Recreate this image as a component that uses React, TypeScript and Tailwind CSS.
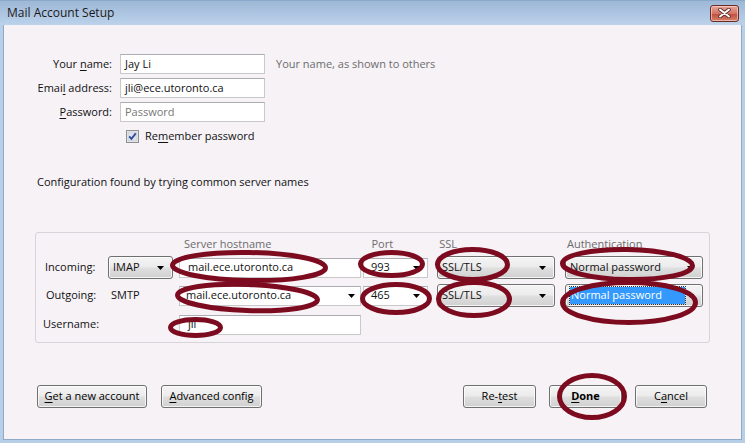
import React from "react";

const Arrow = () => (
  <svg width="7" height="4" viewBox="0 0 7 4" className="shrink-0">
    <path d="M0 0H7L3.5 4Z" fill="#000" />
  </svg>
);

function Drop({ cls, children }: { cls: string; children: React.ReactNode }) {
  return (
    <div
      className={
        "h-[23px] rounded-[3px] border border-[#707070] bg-[linear-gradient(#f4f4f4,#ececec_45%,#dedede_55%,#d0d0d0)] shadow-[inset_0_0_0_1px_rgba(255,255,255,0.75)] flex items-center justify-between pl-[4px] pr-[8px] " +
        cls
      }
    >
      {children}
    </div>
  );
}

function Btn({ cls, children }: { cls: string; children: React.ReactNode }) {
  return (
    <div
      className={
        "h-[23px] rounded-[3px] border border-[#707070] bg-[linear-gradient(#f4f4f4,#ececec_45%,#dedede_55%,#d0d0d0)] shadow-[inset_0_0_0_1px_rgba(255,255,255,0.75)] flex items-center justify-center text-[#000] " +
        cls
      }
    >
      {children}
    </div>
  );
}

function Field({ cls, children }: { cls: string; children?: React.ReactNode }) {
  return (
    <div
      className={
        "h-[20px] bg-white border border-[#c9c9cc] border-t-[#abadb3] flex items-center " +
        cls
      }
    >
      {children}
    </div>
  );
}

const U = ({ c }: { c: string }) => (
  <span className="underline underline-offset-[2px] decoration-1">{c}</span>
);

export default function App() {
  return (
    <div className="relative w-[745px] h-[443px] flex flex-col overflow-hidden font-['Open_Sans','Noto_Sans',sans-serif] text-[11px] text-[#111] bg-[#b7cfe9]">
      {/* Title bar */}
      <div className="h-[25px] shrink-0 flex items-center justify-between pl-[7px] pr-[6px] bg-[linear-gradient(#9db7d6,#bcd2eb)] border-t border-[#8aa8cb]">
        <span className="text-[12px] text-[#1a1a1a] leading-none">Mail Account Setup</span>
        <div className="w-[29px] h-[17px] rounded-[3px] border border-[#6b2b25] bg-[linear-gradient(#e6a69a,#d27466_50%,#c2503f_55%,#d5806a)] flex items-center justify-center shadow-[inset_0_0_0_1px_rgba(255,220,210,0.6)]">
          <svg width="13" height="10" viewBox="0 0 13 10">
            <path d="M2 1.5L11 8.5M11 1.5L2 8.5" stroke="#5b2a24" strokeWidth="3.6" strokeLinecap="round" />
            <path d="M2 1.5L11 8.5M11 1.5L2 8.5" stroke="#ffffff" strokeWidth="2" strokeLinecap="round" />
          </svg>
        </div>
      </div>

      {/* Frame + body */}
      <div className="flex-1 flex pl-[3px] pr-[3px] pb-[3px]">
        <div className="flex-1 flex flex-col bg-[#f6f2f6] border-l border-r border-b border-[#8fa9c8] pt-[29px]">
          {/* Form rows */}
          <div className="flex flex-col gap-[4px]">
            <div className="flex items-center">
              <div className="w-[108px] text-right">Your <U c="n" />ame:</div>
              <Field cls="ml-[8px] w-[145px] pl-[4px]">Jay Li</Field>
              <div className="ml-[11px] text-[#6d6d6d]">Your name, as shown to others</div>
            </div>
            <div className="flex items-center">
              <div className="w-[108px] text-right">Emai<U c="l" /> address:</div>
              <Field cls="ml-[8px] w-[145px] pl-[4px]">jli@ece.utoronto.ca</Field>
            </div>
            <div className="flex items-center">
              <div className="w-[108px] text-right"><U c="P" />assword:</div>
              <Field cls="ml-[8px] w-[145px] pl-[4px] text-[#777]">Password</Field>
            </div>
          </div>

          <div className="flex items-center mt-[7px] ml-[122px] h-[15px]">
            <svg width="13" height="13" viewBox="0 0 13 13">
              <rect x="0.5" y="0.5" width="12" height="12" fill="#f3f3f3" stroke="#8e8f8f" />
              <rect x="2" y="2" width="9" height="9" fill="#dde2ea" stroke="#b9bec8" strokeWidth="0.6" />
              <path d="M3.2 6.4L5.4 8.8L9.8 3.4" stroke="#2a4a9c" strokeWidth="1.8" fill="none" />
            </svg>
            <span className="ml-[6px]">Re<U c="m" />ember password</span>
          </div>

          <div className="mt-[30px] ml-[33px] leading-[16px]">Configuration found by trying common server names</div>

          {/* Group box */}
          <div className="mt-[42px] ml-[31px] w-[675px] h-[111px] border border-[#d6d4d8] rounded-[3px] flex flex-col pt-[3px]">
            <div className="h-[16px] flex items-center text-[#6d6d6d]">
              <div className="ml-[148px]">Server hostname</div>
              <div className="ml-[100px]">Port</div>
              <div className="ml-[46px]">SSL</div>
              <div className="ml-[110px]">Authentication</div>
            </div>

            {/* Row 1 */}
            <div className="mt-[4px] h-[23px] flex items-center">
              <div className="w-[72px] pl-[9px]">Incoming:</div>
              <Drop cls="w-[65px]"><span>IMAP</span><Arrow /></Drop>
              <Field cls="ml-[6px] w-[182px] pl-[8px]">mail.ece.utoronto.ca</Field>
              <Field cls="ml-[2px] w-[65px] pl-[7px] pr-[7px] justify-between"><span>993</span><Arrow /></Field>
              <Drop cls="ml-[9px] w-[118px]"><span>SSL/TLS</span><Arrow /></Drop>
              <Drop cls="ml-[10px] w-[138px]"><span>Normal password</span><Arrow /></Drop>
            </div>

            {/* Row 2 */}
            <div className="mt-[5px] h-[23px] flex items-center">
              <div className="w-[72px] pl-[10px]">Outgoing:</div>
              <div className="w-[65px] pl-[3px]">SMTP</div>
              <Field cls="ml-[6px] w-[182px] pl-[6px] pr-[5px] justify-between"><span>mail.ece.utoronto.ca</span><Arrow /></Field>
              <Field cls="ml-[2px] w-[65px] pl-[7px] pr-[7px] justify-between"><span>465</span><Arrow /></Field>
              <Drop cls="ml-[9px] w-[118px]"><span>SSL/TLS</span><Arrow /></Drop>
              <Drop cls="ml-[10px] w-[138px] pl-[3px]">
                <span className="bg-[#3399ff] text-white h-[17px] w-[115px] flex items-center pl-[1px] outline-1 outline-dotted outline-[#333]">Normal password</span>
                <Arrow />
              </Drop>
            </div>

            {/* Row 3 */}
            <div className="mt-[6px] h-[23px] flex items-center">
              <div className="w-[72px] pl-[7px]">Username:</div>
              <div className="w-[65px]" />
              <Field cls="ml-[6px] w-[182px] pl-[8px]">jli</Field>
            </div>
          </div>

          {/* Buttons */}
          <div className="mt-[42px] flex items-center">
            <Btn cls="ml-[33px] w-[110px]"><span><U c="G" />et a new account</span></Btn>
            <Btn cls="ml-[14px] w-[101px]"><span><U c="A" />dvanced config</span></Btn>
            <div className="flex-1" />
            <Btn cls="w-[73px]"><span>Re-<U c="t" />est</span></Btn>
            <Btn cls="ml-[13px] w-[73px] font-bold"><span><U c="D" />one</span></Btn>
            <Btn cls="ml-[13px] w-[72px] mr-[34px]"><span>C<U c="a" />ncel</span></Btn>
          </div>
        </div>
      </div>

      {/* Red annotation ellipses */}
      <svg className="absolute inset-0 pointer-events-none" width="745" height="443" viewBox="0 0 745 443">
        <g fill="none" stroke="#7d0b20" strokeWidth="5">
          <ellipse cx="249" cy="266.5" rx="76.5" ry="14" transform="rotate(1 249 266.5)" />
          <ellipse cx="247.5" cy="297.5" rx="70" ry="13" transform="rotate(2 247.5 297.5)" />
          <ellipse cx="195.5" cy="327.5" rx="25" ry="8" />
          <ellipse cx="391.5" cy="264" rx="31" ry="11.5" />
          <ellipse cx="396" cy="298.5" rx="33.5" ry="14" />
          <ellipse cx="472.5" cy="264.5" rx="35" ry="15" />
          <ellipse cx="474" cy="299" rx="35.5" ry="16.5" />
          <ellipse cx="627.5" cy="264.5" rx="65" ry="15" transform="rotate(1 627.5 264.5)" />
          <ellipse cx="629" cy="302.5" rx="66.5" ry="20" />
          <ellipse cx="592" cy="396.5" rx="32.5" ry="21" />
        </g>
      </svg>
    </div>
  );
}
